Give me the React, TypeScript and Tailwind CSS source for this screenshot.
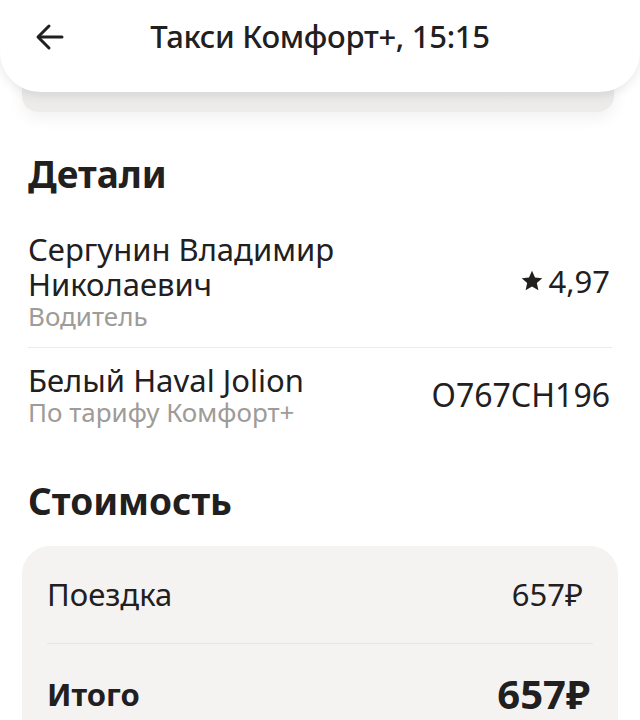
import React from "react";

function Star() {
  return (
    <svg width="22" height="21" viewBox="0 0 24 23" className="mr-[5px] mt-[-2px]">
      <path d="M12 0.8l3.3 7.3 7.9.8-5.9 5.4 1.7 7.8L12 18.1l-7 4 1.7-7.8L.8 8.9l7.9-.8z" fill="#21201f" />
    </svg>
  );
}

export default function App() {
  return (
    <div className="w-[640px] h-[720px] overflow-hidden bg-white text-[#21201f]" style={{ fontFamily: '"Noto Sans", "Liberation Sans", sans-serif' }}>
      <div className="relative h-[112px]">
        <div className="absolute left-[22px] right-[26px] top-0 h-[112px] rounded-b-[16px] bg-gradient-to-b from-[#dcdbda] to-[#edeceb] shadow-[0_6px_16px_rgba(0,0,0,0.06)]" />
        <div className="absolute left-0 right-0 top-0 h-[92px] rounded-b-[40px] bg-white shadow-[0_2px_12px_rgba(0,0,0,0.10)] flex items-center px-[34px]">
          <svg width="32" height="32" viewBox="0 0 32 32" fill="none" stroke="#21201f" strokeWidth="3" strokeLinecap="round" strokeLinejoin="round" className="mt-[-18px]">
            <path d="M28 16H5" />
            <path d="M15 5L4 16l11 11" />
          </svg>
          <div className="absolute left-0 right-0 top-[16px] text-center text-[31px] font-medium leading-[40px] tracking-[-0.3px]">Такси Комфорт+, 15:15</div>
        </div>
      </div>

      <div className="px-[28px]">
        <div className="mt-[40px] text-[37px] font-bold leading-[44px]">Детали</div>

        <div className="mt-[36px] flex items-center justify-between pb-[17px] border-b border-[#ebebea]">
          <div className="flex flex-col">
            <div className="text-[31px] leading-[35px]">Сергунин Владимир<br />Николаевич</div>
            <div className="text-[26px] leading-[28px] text-[#9e9b98]">Водитель</div>
          </div>
          <div className="text-[31px] leading-[35px] flex items-center pr-[2px]">
            <Star />
            <span>4,97</span>
          </div>
        </div>

        <div className="mt-[15px] flex items-center justify-between">
          <div className="flex flex-col">
            <div className="text-[31px] leading-[35px]">Белый Haval Jolion</div>
            <div className="text-[26px] leading-[28px] text-[#9e9b98]">По тарифу Комфорт+</div>
          </div>
          <div className="text-[32px] leading-[36px] pr-[2px]">О767СН196</div>
        </div>

        <div className="mt-[53px] text-[37px] font-bold leading-[44px]">Стоимость</div>
      </div>

      <div className="mx-[22px] mt-[23px] rounded-[28px] bg-[#f4f3f2] px-[25px] pb-[30px]">
        <div className="flex items-center justify-between h-[98px] border-b border-[#e6e5e3]">
          <div className="text-[31px] leading-[35px]">Поездка</div>
          <div className="text-[31px] leading-[35px] pr-[10px]">657₽</div>
        </div>
        <div className="flex items-center justify-between h-[100px]">
          <div className="text-[31px] leading-[35px] font-bold">Итого</div>
          <div className="text-[40px] leading-[44px] font-bold pr-[3px]">657₽</div>
        </div>
      </div>
    </div>
  );
}
